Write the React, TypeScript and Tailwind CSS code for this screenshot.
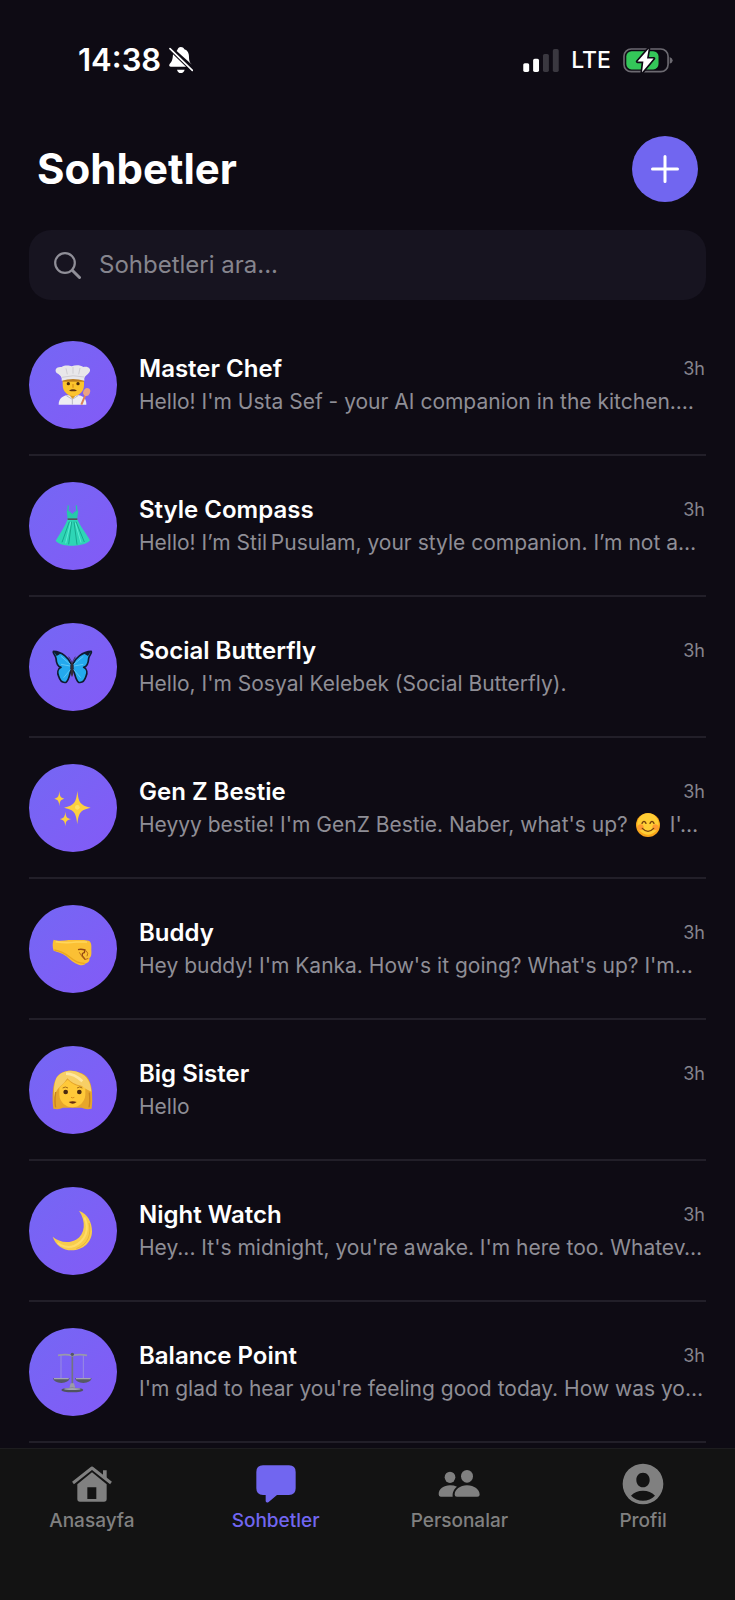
import type { ReactNode } from "react";

const SPARK = "M0-1C.1-.3 .2-.15 1 0C.2 .15 .1 .3 0 1C-.1 .3-.2 .15-1 0C-.2-.15-.1-.3 0-1Z";

function Emoji({ children }: { children: ReactNode }) {
  return (
    <svg viewBox="66 66 132 132" className="size-11" aria-hidden="true">
      {children}
    </svg>
  );
}

function Chef() {
  return (
    <Emoji>
      <path d="M89 191C89 174 100 165 114 163H148C164 165 172 174 172 191Z" fill="#eeeef2" />
      <path d="M119 160H143L131 174Z" fill="#d99a20" />
      <path d="M112 164L130 175L147 164M130 175V191" fill="none" stroke="#b9b8c4" strokeWidth="3" />
      <path d="M101 112H165V132C165 151 151 165 133 165C115 165 101 151 101 132Z" fill="#fcc42c" />
      <path d="M101 113H165V122H101Z" fill="#bc7d1c" />
      <circle cx="118" cy="128" r="5" fill="#4c2b0c" />
      <circle cx="147" cy="128" r="5" fill="#4c2b0c" />
      <path d="M132 129V140" stroke="#dc931b" strokeWidth="4" />
      <path d="M120 149Q132 141 144 149Q132 153 120 149Z" fill="#60320e" />
      <path d="M98 112C96 103 90 101 83 96C75 86 83 76 98 78C106 72 121 73 128 76C141 71 155 73 163 78C178 75 188 84 181 94C176 102 168 104 166 112V119Q132 109 98 119Z" fill="#e8e7ea" />
      <path d="M99 109Q132 100 166 108M111 82L115 100M132 78V98M153 81L149 100" fill="none" stroke="#cfcdd2" strokeWidth="3" />
      <path d="M171 158L157 191" stroke="#db8059" strokeWidth="6" />
      <ellipse cx="173" cy="153" rx="10" ry="12" fill="#eba282" transform="rotate(25 173 153)" />
    </Emoji>
  );
}

function Dress() {
  return (
    <Emoji>
      <path d="M116 92L118 70M144 92L142 70" stroke="#26c4a7" strokeWidth="4" />
      <path d="M113 86Q122 85 130 96Q138 85 148 86L144 113H116Z" fill="#25c9ab" />
      <path d="M116 112H145C153 132 169 151 183 175C176 186 149 192 130 191C111 191 87 187 80 176C94 153 109 132 116 112Z" fill="#2ed5b6" />
      <path d="M116 109H145V114H116Z" fill="#55535e" />
      <path d="M121 119L99 181M128 119L119 187M135 119L144 188M141 119L166 180" stroke="#16a98e" strokeWidth="3" fill="none" />
      <path d="M125 120L110 184M139 122L156 182" stroke="#5cecd1" strokeWidth="3" fill="none" />
    </Emoji>
  );
}

function Butterfly() {
  return (
    <Emoji>
      <g stroke="#101b31" strokeWidth="5" strokeLinejoin="round">
        <path d="M127 124C119 105 100 86 73 85C70 90 80 97 81 106C82 121 86 131 96 133C86 138 84 149 89 160C93 174 101 180 111 178C121 171 122 151 127 136Z" fill="#24a9ed" />
        <path d="M131 124C139 105 160 86 187 85C190 90 180 97 179 106C178 121 174 131 164 133C174 138 176 149 171 160C167 174 159 180 149 178C139 171 138 151 131 136Z" fill="#24a9ed" />
      </g>
      <path d="M124 124L96 100M123 129L96 124M125 139L104 164M134 124L163 100M135 129L163 124M133 139L155 164" stroke="#5cc8f7" strokeWidth="3" />
      <path d="M73 84Q86 84 94 92L83 99ZM187 84Q174 84 166 92L177 99Z" fill="#101b31" />
      <ellipse cx="129" cy="138" rx="4" ry="23" fill="#352c34" />
      <path d="M128 116L119 101M131 116L139 101" stroke="#25202b" strokeWidth="2" />
    </Emoji>
  );
}

function Sparkles() {
  return (
    <Emoji>
      <g fill="#fcd03f">
        <path d={SPARK} transform="translate(145 131) scale(40 50)" />
        <path d={SPARK} transform="translate(91 104) scale(15 23)" />
        <path d={SPARK} transform="translate(109 165) scale(17 22)" />
      </g>
      <circle cx="145" cy="130" r="7" fill="#ffe264" />
    </Emoji>
  );
}

function Fist() {
  return (
    <Emoji>
      <path d="M74 104C86 109 104 107 119 105C142 106 161 104 179 107C187 111 188 119 187 135C188 147 187 156 181 160C183 168 177 175 170 175C166 182 157 182 149 179C135 175 123 164 112 154C100 144 85 141 74 137C70 127 70 112 74 104Z" fill="#fbc034" />
      <path d="M76 135C98 138 113 149 123 157C136 168 151 176 167 175" fill="none" stroke="#e9a623" strokeWidth="4" />
      <path d="M147 134Q156 131 168 135L166 143Q158 144 160 153L169 164" fill="none" stroke="#914514" strokeWidth="4" />
      <path d="M151 142Q157 154 168 164L178 160M171 137Q180 144 174 154" fill="none" stroke="#bc6d18" strokeWidth="3" />
      <path d="M80 110Q110 115 141 111H174" stroke="#ffd65b" strokeWidth="5" fill="none" />
    </Emoji>
  );
}

function Woman() {
  return (
    <Emoji>
      <path d="M73 188C69 157 70 115 82 96C95 72 128 70 149 79C175 84 188 108 189 140Q191 165 188 188Q171 192 158 185H102Q89 192 73 188Z" fill="#e6a62b" />
      <path d="M91 125Q107 109 116 101Q137 123 169 124V147C167 169 150 184 131 184C111 184 92 169 91 147Z" fill="#ffc939" />
      <path d="M82 96C98 72 130 70 150 80C174 87 186 111 187 137Q168 128 157 119Q132 116 115 97Q105 114 91 124Q78 136 77 155Q71 122 82 96Z" fill="#f7cf66" />
      <path d="M111 83Q136 83 160 106" stroke="#ffe7a0" strokeWidth="8" fill="none" />
      <circle cx="110" cy="138" r="7" fill="#4b2a10" />
      <circle cx="151" cy="138" r="7" fill="#4b2a10" />
      <path d="M101 126Q109 120 117 126M144 126Q152 120 160 126" fill="none" stroke="#a26a18" strokeWidth="3" />
      <path d="M126 154Q131 157 136 154" fill="none" stroke="#da8b18" strokeWidth="3" />
      <path d="M119 168Q131 163 143 168Q131 178 119 168Z" fill="#662d12" />
      <path d="M80 138Q76 168 80 184M181 140Q184 168 180 184" fill="none" stroke="#c98421" strokeWidth="4" />
    </Emoji>
  );
}

function Moon() {
  return (
    <Emoji>
      <path d="M150 71C176 81 189 105 189 133C189 166 162 190 128 190C101 190 80 174 71 149C89 164 116 171 141 158C169 142 172 103 150 71Z" fill="#f8cd4c" />
      <path d="M166 91C183 126 170 162 135 177C116 184 96 177 86 168" fill="none" stroke="#ffdc68" strokeWidth="6" />
      <path d="M180 108C188 140 178 172 142 185" fill="none" stroke="#e8b53c" strokeWidth="3" />
    </Emoji>
  );
}

function Scales() {
  return (
    <Emoji>
      <path d="M130 76V180" stroke="#737381" strokeWidth="5" />
      <path d="M87 82Q112 77 130 83Q149 77 174 82" fill="none" stroke="#9999aa" strokeWidth="5" />
      <path d="M96 83V150M163 83V150" stroke="#a8a2d8" strokeWidth="2" />
      <circle cx="130" cy="79" r="5" fill="#555766" />
      <path d="M72 151H122Q119 164 97 165Q75 164 72 151ZM138 151H188Q185 164 163 165Q141 164 138 151Z" fill="#565966" />
      <path d="M75 152H119M141 152H185" stroke="#a6a7b3" strokeWidth="4" />
      <path d="M125 166H135L139 181H121Z" fill="#9b9ba8" />
      <ellipse cx="130" cy="186" rx="33" ry="7" fill="#50535f" />
      <ellipse cx="130" cy="183" rx="25" ry="3" fill="#a2a4b0" />
    </Emoji>
  );
}

function Smile() {
  return (
    <svg viewBox="0 0 72 72" className="ml-2 mr-2.5 inline-block size-6 align-text-bottom" role="img" aria-label="😊">
      <circle cx="36" cy="36" r="36" fill="#f9a51b" />
      <circle cx="36" cy="33" r="32" fill="#ffce35" />
      <circle cx="14" cy="43" r="9" fill="#ff9b32" />
      <circle cx="58" cy="43" r="9" fill="#ff9b32" />
      <path d="M18 31Q24 19 30 31M42 31Q48 19 54 31M19 46Q36 64 53 46" fill="none" stroke="#75420e" strokeWidth="4" strokeLinecap="round" />
    </svg>
  );
}

const chats: { name: string; preview: ReactNode; time: string; icon: ReactNode }[] = [
  { name: "Master Chef", preview: "Hello! I'm Usta Sef - your AI companion in the kitchen.…", time: "3h", icon: <Chef /> },
  { name: "Style Compass", preview: "Hello! I’m Stil\u2009Pusulam, your style companion. I’m not a…", time: "3h", icon: <Dress /> },
  { name: "Social Butterfly", preview: "Hello, I'm Sosyal Kelebek (Social Butterfly).", time: "3h", icon: <Butterfly /> },
  { name: "Gen Z Bestie", preview: <>Heyyy bestie! I'm GenZ Bestie. Naber, what's up?<Smile />I'…</>, time: "3h", icon: <Sparkles /> },
  { name: "Buddy", preview: "Hey buddy! I'm Kanka. How's it going? What's up? I'm…", time: "3h", icon: <Fist /> },
  { name: "Big Sister", preview: "Hello", time: "3h", icon: <Woman /> },
  { name: "Night Watch", preview: "Hey... It's midnight, you're awake. I'm here too. Whatev…", time: "3h", icon: <Moon /> },
  { name: "Balance Point", preview: "I'm glad to hear you're feeling good today. How was yo…", time: "3h", icon: <Scales /> },
];

const tabs = [
  {
    label: "Anasayfa",
    active: false,
    icon: (
      <>
        <path d="M6 60L63 15L120 60" fill="none" stroke="currentColor" strokeWidth="9" strokeLinejoin="round" />
        <path d="M96 22H107V48L96 39Z" />
        <path fillRule="evenodd" d="M63 28L107 64V108Q107 116 99 116H27Q19 116 19 108V64ZM49 73V108H76V73Z" />
      </>
    ),
  },
  {
    label: "Sohbetler",
    active: true,
    icon: <path d="M24 7H102Q122 7 122 27V76Q122 96 102 96H66L41 117Q35 121 32 115V96H24Q4 96 4 76V27Q4 7 24 7Z" />,
  },
  {
    label: "Personalar",
    active: false,
    icon: (
      <>
        <ellipse cx="36" cy="43" rx="16" ry="17" />
        <ellipse cx="87" cy="40" rx="18" ry="19" />
        <path d="M2 94C2 78 17 67 36 67Q48 67 57 71C49 77 43 86 44 101H8Q2 101 2 94ZM50 95C50 80 66 67 87 67C109 67 125 80 125 95Q125 101 118 101H57Q50 101 50 95Z" />
      </>
    ),
  },
  {
    label: "Profil",
    active: false,
    icon: (
      <path
        fillRule="evenodd"
        d="M63 2A61 61 0 1 1 63 124A61 61 0 1 1 63 2ZM63 29C50 29 43 39 43 51C43 63 51 73 63 73C75 73 83 63 83 51C83 39 76 29 63 29ZM27 98Q42 113 63 113Q84 113 99 98Q85 83 63 83Q41 83 27 98Z"
      />
    ),
  },
];

function StatusBar() {
  return (
    <div className="flex h-[120px] items-center justify-between pl-[78px] pr-[62px] text-white">
      <div className="flex items-center gap-2">
        <span className="text-[31px] font-semibold leading-8">14:38</span>
        <svg viewBox="0 0 72 78" className="h-[26px] w-6" fill="currentColor" aria-label="Silent">
          <path d="M35 0C42 0 45 3 46 7C56 10 60 19 60 30C60 43 63 48 69 53L23 12Q26 8 26 7C27 3 30 0 35 0ZM12 22L51 59H5Q-2 58 2 51C9 44 11 38 12 22ZM24 68H47Q44 78 35 78Q27 78 24 68Z" />
          <path d="M3 5L70 70" stroke="currentColor" strokeWidth="5" strokeLinecap="round" />
        </svg>
      </div>
      <div className="flex items-center gap-3">
        <svg viewBox="0 0 108 70" className="h-[23px] w-9" fill="currentColor" aria-label="Signal">
          <rect x="0" y="43" width="18" height="27" rx="5" />
          <rect x="30" y="30" width="18" height="40" rx="5" />
          <rect x="60" y="15" width="18" height="55" rx="5" fill="#3a3840" />
          <rect x="90" y="0" width="18" height="70" rx="5" fill="#3a3840" />
        </svg>
        <span className="text-[23px] font-medium leading-8">LTE</span>
        <svg viewBox="0 0 150 76" className="h-[25px] w-[50px]" aria-label="Charging">
          <rect x="2" y="3" width="134" height="69" rx="22" fill="none" stroke="#6c6a71" strokeWidth="5" />
          <path d="M141 27Q150 31 150 38Q150 45 141 48Z" fill="#6c6a71" />
          <rect x="9" y="10" width="98" height="55" rx="16" fill="#34c759" />
          <path d="M77 2L43 41H61L57 74L92 32H72Z" fill="#fff" stroke="#0e0b14" strokeWidth="10" strokeLinejoin="round" paintOrder="stroke" />
        </svg>
      </div>
    </div>
  );
}

export default function App() {
  return (
    <div className="flex min-h-screen flex-col bg-[#0e0b14] font-['Inter','Liberation_Sans',sans-serif]">
      <StatusBar />

      <header className="flex items-center justify-between px-[37px] pt-4">
        <h1 className="text-[42px] font-bold leading-[50px] text-white">Sohbetler</h1>
        <button type="button" aria-label="Yeni sohbet" className="flex size-[66px] items-center justify-center rounded-full bg-[#7166f0] text-white">
          <svg viewBox="0 0 28 28" className="size-7" fill="none" stroke="currentColor" strokeWidth="3" strokeLinecap="round">
            <path d="M14 1.5V26.5M1.5 14H26.5" />
          </svg>
        </button>
      </header>

      <label className="mx-[29px] mt-7 flex h-[70px] items-center gap-[18px] rounded-[22px] bg-[#171420] px-[25px] text-[#908f98]">
        <svg viewBox="0 0 27 27" className="size-[27px] shrink-0" fill="none" stroke="currentColor" strokeLinecap="round">
          <circle cx="11" cy="11" r="9.8" strokeWidth="2.2" />
          <path d="M18.5 18.5L25.5 25.5" strokeWidth="3" />
        </svg>
        <input
          type="text"
          aria-label="Sohbetleri ara"
          placeholder="Sohbetleri ara..."
          className="min-w-0 flex-1 bg-transparent text-[24px] leading-8 text-white outline-none placeholder:text-[#86858e]"
        />
      </label>

      <ul className="mx-[29px] mt-[15px] pb-[5px]">
        {chats.map((chat) => (
          <li key={chat.name} className="border-b-2 border-[#221f29]">
            <a href="#" className="flex items-center gap-[22px] pb-[25px] pt-[26px]">
              <div className="flex size-[88px] shrink-0 items-center justify-center rounded-full bg-linear-to-br from-[#7467f4] to-[#835af6]">
                {chat.icon}
              </div>
              <div className="min-w-0 flex-1">
                <div className="flex items-center justify-between pr-px">
                  <h2 className="text-[24px] font-semibold leading-[33px] text-white">{chat.name}</h2>
                  <time className="text-[18px] leading-6 text-[#85848d]">{chat.time}</time>
                </div>
                <p className="overflow-hidden whitespace-nowrap text-[21px] leading-[33px] text-[#8f8e96]">{chat.preview}</p>
              </div>
            </a>
          </li>
        ))}
      </ul>

      <nav className="sticky bottom-0 mt-auto grid grid-cols-4 border-t border-[#1d1d1f] bg-[#131313] pb-[67px] pt-3.5">
        {tabs.map((tab) => (
          <a
            key={tab.label}
            href="#"
            aria-current={tab.active ? "page" : undefined}
            className={tab.active ? "flex flex-col items-center gap-1 text-[#7166f0]" : "flex flex-col items-center gap-1 text-[#808080]"}
          >
            <svg viewBox="0 0 126 126" className="size-[42px]" fill="currentColor" aria-hidden="true">
              {tab.icon}
            </svg>
            <span className="text-[19px] font-medium leading-6">{tab.label}</span>
          </a>
        ))}
      </nav>
    </div>
  );
}
